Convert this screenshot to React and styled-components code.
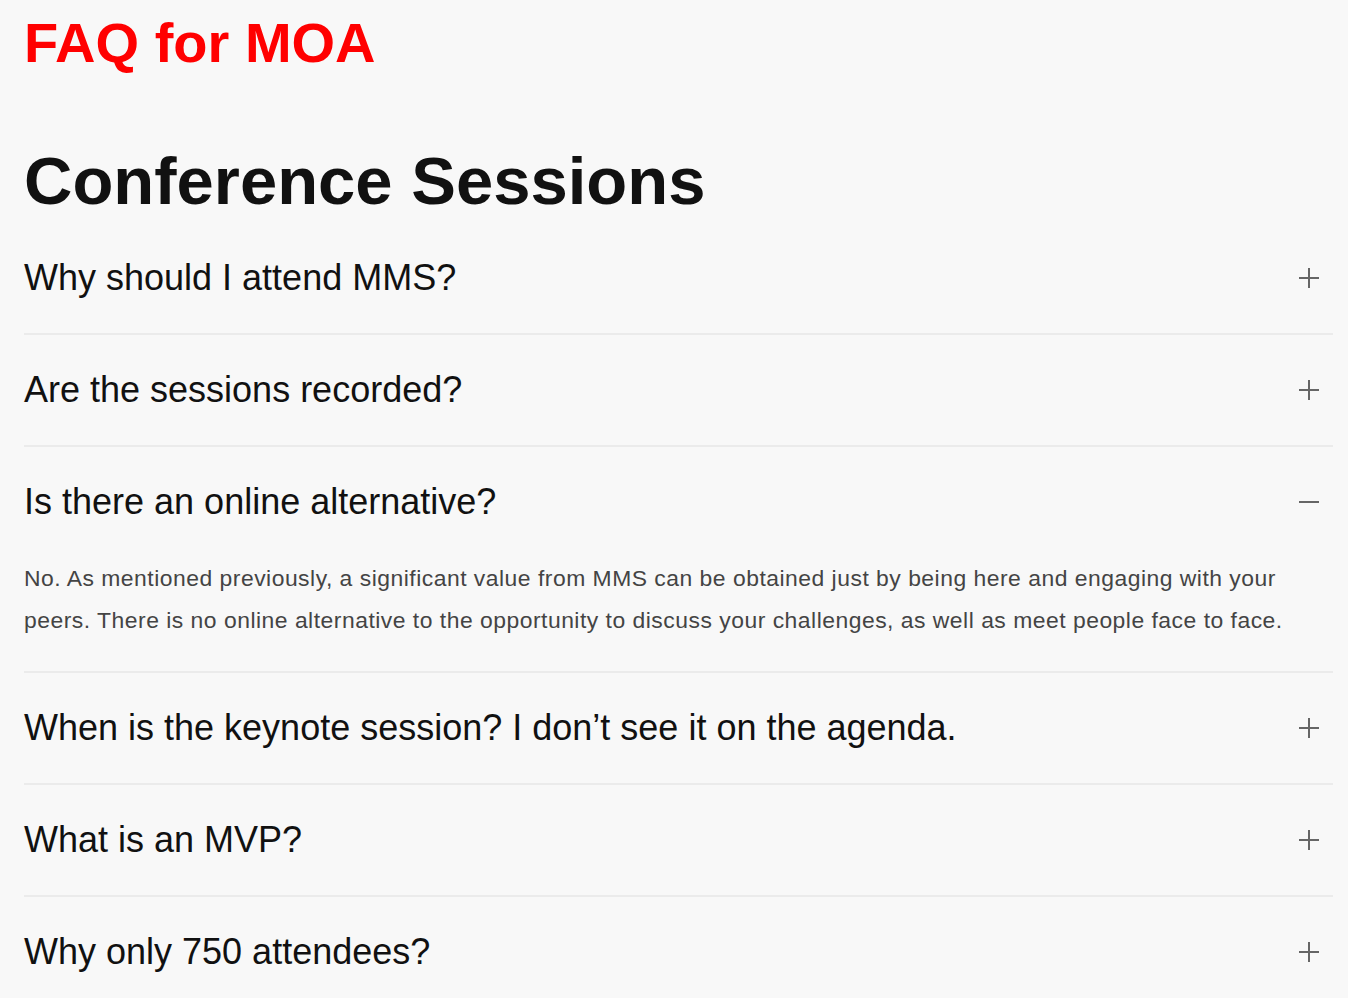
import { useState } from "react";
import styled, { createGlobalStyle } from "styled-components";

const GlobalStyle = createGlobalStyle`
  body {
    margin: 0;
    background: #f8f8f8;
    font-family: "Liberation Sans", Arial, sans-serif;
  }
`;

const Page = styled.div`
  padding: 15px 15px 0 24px;
`;

const Brand = styled.h1`
  margin: 0;
  font-size: 56px;
  line-height: 56px;
  font-weight: 700;
  color: #ff0000;
`;

const SectionTitle = styled.h2`
  margin: 76px 0 9px;
  font-size: 67px;
  line-height: 67px;
  font-weight: 700;
  color: #111;
`;

const List = styled.div`
  display: flex;
  flex-direction: column;
`;

const Item = styled.div`
  border-bottom: 2px solid #ebebeb;
  &:last-child {
    border-bottom: none;
  }
`;

const Question = styled.button`
  display: flex;
  align-items: center;
  justify-content: space-between;
  width: 100%;
  height: 110px;
  padding: 0 14px 0 0;
  border: none;
  background: none;
  cursor: pointer;
  text-align: left;
  font-family: inherit;
  font-size: 36px;
  line-height: 36px;
  color: #111;
`;

const Answer = styled.p`
  margin: 0;
  padding: 0 20px 30px 0;
  font-size: 22.9px;
  letter-spacing: 0.5px;
  line-height: 42px;
  color: #444;
`;

const Toggle = ({ open }) => (
  <svg width="20" height="20" viewBox="0 0 20 20" aria-hidden="true">
    <path d="M0 10H20" stroke="#666" strokeWidth="2" />
    {!open && <path d="M10 0V20" stroke="#666" strokeWidth="2" />}
  </svg>
);

const faqs = [
  { q: "Why should I attend MMS?", a: "" },
  { q: "Are the sessions recorded?", a: "" },
  {
    q: "Is there an online alternative?",
    a: "No. As mentioned previously, a significant value from MMS can be obtained just by being here and engaging with your peers. There is no online alternative to the opportunity to discuss your challenges, as well as meet people face to face.",
  },
  { q: "When is the keynote session? I don’t see it on the agenda.", a: "" },
  { q: "What is an MVP?", a: "" },
  { q: "Why only 750 attendees?", a: "" },
];

export default function App() {
  const [open, setOpen] = useState(2);
  return (
    <Page>
      <GlobalStyle />
      <Brand>FAQ for MOA</Brand>
      <SectionTitle>Conference Sessions</SectionTitle>
      <List>
        {faqs.map((item, i) => (
          <Item key={i}>
            <Question onClick={() => setOpen(open === i ? -1 : i)}>
              <span>{item.q}</span>
              <Toggle open={open === i} />
            </Question>
            {open === i && <Answer>{item.a}</Answer>}
          </Item>
        ))}
      </List>
    </Page>
  );
}
